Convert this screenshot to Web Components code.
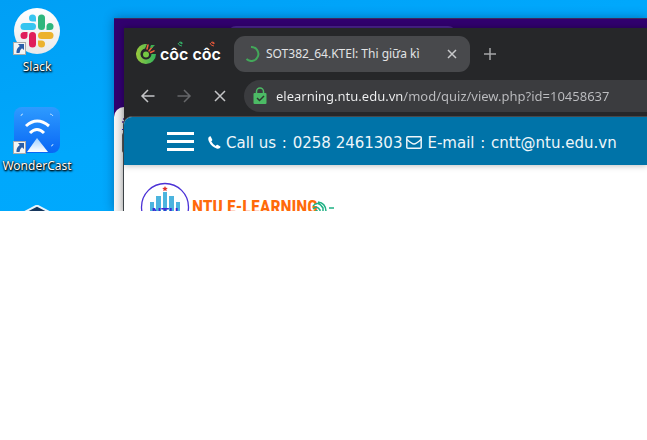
<!DOCTYPE html>
<html lang="vi">
<head>
<meta charset="utf-8">
<title>Desktop</title>
<style>
body{margin:0;background:#fff;font-family:"Noto Sans","Open Sans",sans-serif}
</style>
</head>
<body>
<desktop-screen>
  <desktop-shortcut name="Slack">
    <svg width="48" height="48" viewBox="0 0 48 48" aria-hidden="true">
      <defs><linearGradient id="sw" x2="0" y2="1"><stop stop-color="#fff"/><stop offset="1" stop-color="#e9e9ea"/></linearGradient></defs>
      <circle cx="24" cy="24" r="23" fill="url(#sw)"/>
      <g fill="#36c5f0"><rect x="7.5" y="16" width="15.500" height="7" rx="3.500"/><path d="M23 14.500h-3.500a3.500 3.500 0 1 1 3.500-3.500z"/></g>
      <g fill="#2eb67d"><rect x="25" y="7.500" width="7" height="15.500" rx="3.500"/><path d="M33.500 23v-3.500a3.500 3.500 0 1 1 3.500 3.500z"/></g>
      <g fill="#ecb22e"><rect x="25" y="25" width="15.500" height="7" rx="3.500"/><path d="M25 33.500h3.500a3.500 3.500 0 1 1-3.500 3.500z"/></g>
      <g fill="#e01e5a"><rect x="16" y="25" width="7" height="15.500" rx="3.500"/><path d="M14.500 25v3.500a3.500 3.500 0 1 1-3.500-3.500z"/></g>
    </svg>
  </desktop-shortcut>
  <desktop-shortcut name="WonderCast">
    <svg width="48" height="48" viewBox="0 0 48 48" aria-hidden="true">
      <defs><linearGradient id="wc" x2="0" y2="1"><stop stop-color="#2e9bff"/><stop offset="1" stop-color="#0867f5"/></linearGradient>
      <linearGradient id="wt" x2="0" y2="1"><stop stop-color="#9fd0ff"/><stop offset="1" stop-color="#fff"/></linearGradient></defs>
      <rect x="1" y="1" width="46" height="46" rx="8" fill="url(#wc)"/>
      <path d="M24 32l11 14H14z" fill="url(#wt)"/>
      <g fill="none" stroke="#fff" stroke-width="3"><path d="M13 20q11-10 23 0M17 27q7-7 14 0"/></g>
      <g fill="none" stroke="#b5dcff" stroke-width="1"><path d="M8 10q0-2 2-2M37 8q2 0 3 2M40 38q0 2-2 2"/></g>
    </svg>
  </desktop-shortcut>
  <desktop-shortcut name="" plain>
    <svg width="48" height="48" viewBox="0 0 48 48" aria-hidden="true"><path d="M24 .500L43 10.500v25L24 46 5 35.500v-25z" fill="#16365c" stroke="#e8f4fc" stroke-width="2"/></svg>
  </desktop-shortcut>
  <back-window slot="windows"></back-window>
  <browser-window slot="windows">
    <browser-tab slot="tabs">SOT382_64.KTEl: Thi giữa kì</browser-tab>
    <address-bar slot="tools" value="elearning.ntu.edu.vn/mod/quiz/view.php?id=10458637"></address-bar>
    <contact-bar></contact-bar>
    <site-brand></site-brand>
  </browser-window>
</desktop-screen>

<script>
const define = (name, html, setup) => customElements.define(name, class extends HTMLElement {
  connectedCallback() {
    if (this.shadowRoot) return;
    this.attachShadow({mode: 'open'}).innerHTML = html;
    if (setup) setup(this, this.shadowRoot);
  }
});

define('desktop-screen', `
<style>
:host{display:block;position:relative;height:211px;overflow:hidden;background:linear-gradient(165deg,#009ff5,#00a8fc 45%,#00aaff)}
.icons{display:grid;grid-template-columns:74px;row-gap:28px;padding-top:7px}
</style>
<div class="icons"><slot></slot></div><slot name="windows"></slot>`);

define('desktop-shortcut', `
<style>
:host{display:flex;flex-direction:column;align-items:center}
.icon{position:relative;height:48px}
.arrow{position:absolute;left:0;bottom:0}
:host([plain]) .arrow{display:none}
.label{font-size:12px;line-height:23px;height:23px;color:#fff;text-shadow:0 0 1px #000,1px 1px 2px #000,0 1px 2px #000}
</style>
<div class="icon"><slot></slot>
<svg class="arrow" width="13" height="13" viewBox="0 0 13 13" aria-hidden="true"><rect x=".5" y=".5" width="12" height="12" fill="#f4f4f4" stroke="#aaa"/><path d="M5 2h6v6L9 6.300Q6.500 8 6.500 11H3.500Q3 6.500 6.800 4z" fill="#2b5ea8"/></svg></div>
<div class="label"></div>`, (el, root) => {
  root.querySelector('.label').textContent = el.getAttribute('name');
});

define('back-window', `
<style>
:host{position:absolute;left:114px;right:0;top:18px;bottom:0;background:#31006e;border-top:1px solid #3d2a5c;box-sizing:border-box;box-shadow:0 0 10px rgba(0,40,90,.45)}
.tab{position:absolute;left:114px;top:7px;width:228px;height:30px;border-radius:8px;background:#4c2391}
.page{position:absolute;left:0;right:0;top:88px;bottom:0;background:linear-gradient(90deg,#f5f5f5,#dcdcdc 10px);border-radius:10px 0 0 0}
svg{position:absolute;left:7px;top:10px}
</style>
<div class="tab"></div><div class="page">
<svg width="4" height="50" viewBox="0 0 4 50" aria-hidden="true"><path d="M2 2h2M1 5h3M2 8h2" stroke="#7453a8" stroke-width="2"/><path d="M1 12.500h3" stroke="#2020d0"/><path d="M4 15.500Q1.500 15.500 1.500 18v16q0 2 2.500 2" fill="none" stroke="#555"/><path d="M3 41v6" stroke="#4a2405" stroke-width="2"/></svg></div>`);

define('browser-window', `
<style>
:host{position:absolute;left:124px;right:0;top:28px;bottom:0;background:#262729;box-shadow:0 0 6px rgba(0,0,0,.35);display:flex;flex-direction:column}
.strip{display:flex;align-items:center;height:52px;box-sizing:border-box;padding:0 0 0 12px}
.logo{display:flex;align-items:center;color:#fff;position:relative;width:98px;gap:4px}
.word{font:600 16px/20px Inter,sans-serif;white-space:nowrap}
.marks{position:absolute;left:24px;top:-3px}
.plus{margin-left:12px}
button{border:0;background:none;padding:0;width:16px;height:16px;display:block}
button svg{display:block}
.tools{display:flex;align-items:center;height:32px;padding-left:16px;gap:20px;flex:none}
.page{flex:1;margin-top:4px;background:#fff;border-top:1px solid #48494c;border-left:1px solid #3b4247;border-radius:9px 0 0 0;overflow:hidden;margin-left:-1px}
</style>
<div class="strip">
  <div class="logo">
    <svg width="20" height="20" viewBox="0 0 20 20" aria-hidden="true">
      <defs><linearGradient id="g" x2="1" y2="0"><stop stop-color="#9ac83c"/><stop offset="1" stop-color="#30b45c"/></linearGradient></defs>
      <path d="M11 0A10 10 0 1 0 20 10h-4.500A5.500 5.500 0 1 1 9 4.600z" fill="url(#g)"/><circle cx="10" cy="10.500" r="3" fill="#75c943"/>
      <path d="M11 5l1-4M13 7l3.500-4.500M14.500 8.500L18 6.800" stroke="#f3643c" stroke-width="1.500" stroke-linecap="round"/><path d="M14 3.500L15 1h4l-3 3z" fill="#3eae52"/>
    </svg>
    <span class="word">côc côc</span>
    <svg class="marks" width="60" height="8" viewBox="0 0 60 8" fill="none" stroke-width="1" aria-hidden="true"><path d="M18 2q1 3 4 3M19 1l3 2M20 1q3 0 2 2" stroke="#35b56a"/><path d="M50 2q1 3 4 3M51 1l3 2M52 1q3 0 2 2" stroke="#e8583a"/></svg>
  </div>
  <slot name="tabs"></slot>
  <button class="plus" aria-label="New tab"><svg width="16" height="16" viewBox="0 0 16 16" stroke="#a5a6a8" stroke-width="1.500"><path d="M8 2v12M2 8h12"/></svg></button>
</div>
<div class="tools">
  <button aria-label="Back"><svg width="16" height="16" viewBox="0 0 16 16" fill="none" stroke="#c4c5c7" stroke-width="1.500"><path d="M14.500 8H2.500M8 2L2 8l6 6"/></svg></button>
  <button aria-label="Forward"><svg width="16" height="16" viewBox="0 0 16 16" fill="none" stroke="#66676a" stroke-width="1.500"><path d="M1.500 8h12M8 2l6 6-6 6"/></svg></button>
  <button aria-label="Stop"><svg width="16" height="16" viewBox="0 0 16 16" fill="none" stroke="#c4c5c7" stroke-width="1.500"><path d="M3 3l10 10M13 3L3 13"/></svg></button>
  <slot name="tools"></slot>
</div>
<div class="page"><slot></slot></div>`);

define('browser-tab', `
<style>
:host{display:flex;align-items:center;box-sizing:border-box;width:236px;height:36px;padding:0 10px;border-radius:11px;background:#48494c;color:#e2e3e5;font-size:12px;line-height:18px}
.title{flex:1;white-space:nowrap;overflow:hidden;margin-left:6px}
button{border:0;background:none;padding:0;width:16px;height:16px}
svg{display:block}
</style>
<svg width="16" height="16" viewBox="0 0 16 16" fill="none" stroke="#43a85a" stroke-width="2" aria-hidden="true"><path d="M7 1A7 7 0 1 1 2.500 13"/></svg>
<span class="title"><slot></slot></span>
<button aria-label="Close tab"><svg width="16" height="16" viewBox="0 0 16 16" stroke="#c8c9cb" stroke-width="1.500"><path d="M4 4l8 8M12 4l-8 8"/></svg></button>`);

define('address-bar', `
<style>
:host{display:flex;align-items:center;flex:1;height:32px;padding-left:8px;gap:8px;border-radius:16px 0 0 16px;background:#3b3c3f;margin-left:-4px}
svg{flex:none}
input{flex:1;min-width:0;border:0;padding:0;outline:0;height:20px;font:13px/20px "Noto Sans","Open Sans",sans-serif;color:#bdbec1;-webkit-text-fill-color:transparent;background:linear-gradient(90deg,#f0f1f2 128px,#bdbec1 128px);-webkit-background-clip:text;background-clip:text}
</style>
<svg width="16" height="18" viewBox="0 0 16 18" aria-hidden="true"><path d="M4.500 7V4.500a3.500 3.500 0 0 1 7 0V7" fill="none" stroke="#4cbb65" stroke-width="1.500"/><rect x="1.500" y="6" width="13" height="11" rx="1" fill="#4cbb65"/><path d="M5 11l2.500 2.500L12 9" fill="none" stroke="#2c3a30" stroke-width="1.500"/></svg>
<input type="text" aria-label="Address" spellcheck="false">`, (el, root) => {
  root.querySelector('input').value = el.getAttribute('value');
});

define('contact-bar', `
<style>
:host{display:flex;align-items:center;height:48px;padding:3px 0 0 43px;box-sizing:border-box;background:#0073a8;color:#eef6fa;font:15px/20px "DejaVu Sans",sans-serif;white-space:nowrap;box-shadow:0 1px 6px rgba(0,0,0,.25);position:relative}
button{border:0;background:none;padding:0;width:27px;height:19px;display:flex;flex-direction:column;justify-content:space-between;margin:0 14px 2px 0}
button i{height:3px;width:100%;background:#fff}
.item{display:flex;align-items:center;gap:5px;margin-right:4px}
.sep{margin:0 1px}
</style>
<button aria-label="Menu"><i></i><i></i><i></i></button>
<span class="item"><svg width="13" height="13" viewBox="0 0 13 13" aria-hidden="true"><path d="M2.600.300L4.200 3.600Q4.600 4.300 3.200 5.300Q4.700 8.400 7.700 9.900Q8.900 8.400 9.500 8.800L12.400 10.400Q13 10.800 11.900 12.100Q10.500 13.300 8.600 12.600Q3 10.600.700 5.100Q-.300 2.200.900 1.100Q1.900 0 2.600.300z" fill="#fff"/></svg><span>Call us <span class="sep">:</span> 0258 2461303</span></span>
<span class="item"><svg width="16" height="13" viewBox="0 0 16 13" fill="none" stroke="#eef6fa" stroke-width="1.500" aria-hidden="true"><rect x=".8" y=".8" width="14.400" height="11.400" rx="1"/><path d="M1 3.500q5 4.500 7 4.500t7-4.500"/></svg><span>E-mail <span class="sep">:</span> cntt@ntu.edu.vn</span></span>`);

define('site-brand', `
<style>
:host{display:flex;align-items:flex-start;padding:17px 0 0 16px;gap:2px}
.name{margin:15px 0 0;font:bold 18px/20px "Liberation Sans Narrow","Roboto Condensed",Roboto,sans-serif;color:#ff6a0a;white-space:nowrap;position:relative}
svg{flex:none}
.swirl{position:absolute;right:-20px;top:4px}
</style>
<svg width="50" height="50" viewBox="0 0 50 50" aria-label="NTU">
  <circle cx="25" cy="25" r="23.500" fill="#fff" stroke="#4b31d6" stroke-width="1.300"/>
  <path d="M25 4l.8 1.800 2 .2-1.500 1.300.4 2L25 8.300l-1.700 1 .4-2L22.200 6l2-.2z" fill="#e0302a"/>
  <path d="M10 36V20h4v16zM16 36V14h5v22zM23 36V10h4v26zM29 36V14h5v22zM36 36V20h4v16z" fill="#4cb4de"/>
  <text x="25" y="35" text-anchor="middle" font-family="Liberation Sans" font-weight="bold" font-size="13" fill="#3a2bd4">NTU</text>
</svg>
<h1 class="name">NTU E-LEARNING<svg class="swirl" width="28" height="16" viewBox="0 0 28 16" fill="none" stroke="#1fb184" stroke-width="1.500" aria-hidden="true"><path d="M3 5q5-6 10 2v7M3 8q4-4 7 1v5M5 11q2-3 3 1M8 1q8 1 8 10M19 7h5"/></svg></h1>`);
</script>
</body>
</html>
